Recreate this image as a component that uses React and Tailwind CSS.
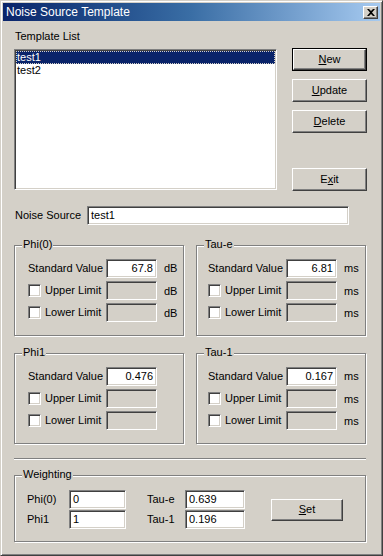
import React from 'react';

// classic 3D edges
const sunken = 'border border-t-[#808080] border-l-[#808080] border-b-white border-r-white shadow-[inset_1px_1px_0_#404040,inset_-1px_-1px_0_#d4d0c8]';
const raised = 'border border-t-white border-l-white border-b-[#404040] border-r-[#404040] shadow-[inset_-1px_-1px_0_#808080]';
const etched = 'border border-[#808080] shadow-[inset_1px_1px_0_white,1px_1px_0_white]';

const Button = ({ children, isDefault, className = '' }) => (
    <div className={`${isDefault ? 'border border-black' : ''} ${className}`}>
        <div className={`${raised} bg-[#d4d0c8] flex items-center justify-center w-full h-full`}>
            <span>{children}</span>
        </div>
    </div>
);

const Field = ({ value, align = 'left', disabled, className = '' }) => (
    <div className={`${sunken} ${disabled ? 'bg-[#d4d0c8]' : 'bg-white'} h-[19px] flex items-center px-[3px] ${align === 'right' ? 'justify-end' : ''} ${className}`}>
        <span className="leading-none">{value}</span>
    </div>
);

const Checkbox = () => (
    <div className={`${sunken} bg-white w-[13px] h-[13px] shrink-0`} />
);

const GroupBox = ({ title, className = '', children }) => (
    <div className={`relative ${etched} ${className}`}>
        <span className="absolute -top-[8px] left-[7px] px-[1px] bg-[#d4d0c8] leading-[13px]">{title}</span>
        {children}
    </div>
);

// one parameter group: standard value + optional limits
const ParamGroup = ({ title, value, unit, padLeft, showUnitOnValue = true }) => (
    <GroupBox title={title} className={`w-[170px] pt-[13px] pb-[13px] ${padLeft}`}>
        <div className="flex flex-col gap-[3px]">
            <div className="flex items-center">
                <span className="w-[78px]">Standard Value</span>
                <Field value={value} align="right" className="w-[51px]" />
                {showUnitOnValue && <span className="ml-[7px]">{unit}</span>}
            </div>
            {['Upper Limit', 'Lower Limit'].map(label => (
                <div key={label} className="flex items-center">
                    <div className="w-[78px] flex items-center gap-[4px]">
                        <Checkbox />
                        <span>{label}</span>
                    </div>
                    <Field value="" disabled className="w-[51px]" />
                    {unit && <span className="ml-[7px] mt-[2px]">{unit}</span>}
                </div>
            ))}
        </div>
    </GroupBox>
);

export default function App() {
    return (
        <div className="w-[383px] h-[556px] bg-[#d4d0c8] border border-t-[#d4d0c8] border-l-[#d4d0c8] border-r-[#404040] border-b-[#404040] shadow-[inset_1px_1px_0_white,inset_-1px_-1px_0_#808080] p-[2px] text-[11px] text-black font-['Liberation_Sans',Arial,sans-serif] select-none">
            {/* Title bar */}
            <div className="h-[18px] bg-gradient-to-r from-[#0a246a] via-[#3a6ea5] to-[#a6caf0] flex items-center justify-between pl-[3px] pr-[2px]">
                <span className="text-white text-[12px] leading-none">Noise Source Template</span>
                <div className={`${raised} bg-[#d4d0c8] w-[15px] h-[13px] flex items-center justify-center`}>
                    <svg width="8" height="7" viewBox="0 0 8 7">
                        <path d="M0 0h2l2 2 2-2h2L5 3.5 8 7H6L4 5 2 7H0l3-3.5z" fill="black" />
                    </svg>
                </div>
            </div>

            <div className="pl-[11px] pr-[13px]">
                {/* Template list + buttons */}
                <div className="flex items-start mt-[9px]">
                    <div className="flex flex-col w-[263px]">
                        <span className="leading-[13px] ml-[1px]">Template List</span>
                        <div className={`${sunken} bg-white h-[141px] mt-[6px] p-[1px]`}>
                            <div className="bg-[#0a246a] text-white h-[13px] leading-[12px] pl-[1px] outline-1 outline-dotted outline-[#d4d0c8] -outline-offset-1">test1</div>
                            <div className="h-[13px] leading-[13px] pl-[1px]">test2</div>
                        </div>
                    </div>
                    <div className="ml-[15px] mt-[18px] flex flex-col w-[75px]">
                        <Button isDefault className="h-[23px]"><span className="underline">N</span>ew</Button>
                        <Button className="h-[23px] mt-[8px]"><span className="underline">U</span>pdate</Button>
                        <Button className="h-[23px] mt-[8px]"><span className="underline">D</span>elete</Button>
                        <Button className="h-[23px] mt-[35px]">E<span className="underline">x</span>it</Button>
                    </div>
                </div>

                {/* Noise source */}
                <div className="flex items-center mt-[15px]">
                    <span className="w-[72px] ml-[1px]">Noise Source</span>
                    <Field value="test1" className="w-[262px]" />
                </div>

                {/* Parameter groups */}
                <div className="flex gap-[12px] mt-[20px]">
                    <ParamGroup title="Phi(0)" value="67.8" unit="dB" padLeft="pl-[13px]" />
                    <ParamGroup title="Tau-e" value="6.81" unit="ms" padLeft="pl-[11px]" />
                </div>
                <div className="flex gap-[12px] mt-[17px]">
                    <ParamGroup title="Phi1" value="0.476" unit="" padLeft="pl-[13px]" showUnitOnValue={false} />
                    <ParamGroup title="Tau-1" value="0.167" unit="ms" padLeft="pl-[11px]" />
                </div>

                {/* Separator */}
                <div className="mt-[14px] w-[352px] h-[2px] border-t border-t-[#808080] border-b border-b-white" />

                {/* Weighting */}
                <GroupBox title="Weighting" className="w-[352px] mt-[15px] pt-[14px] pb-[12px] pl-[12px]">
                    <div className="flex items-center">
                        <div className="grid grid-cols-[42px_57px] gap-y-[1px] items-center">
                            <span>Phi(0)</span>
                            <Field value="0" />
                            <span>Phi1</span>
                            <Field value="1" />
                        </div>
                        <div className="grid grid-cols-[38px_60px] gap-y-[1px] items-center ml-[21px]">
                            <span>Tau-e</span>
                            <Field value="0.639" />
                            <span>Tau-1</span>
                            <Field value="0.196" />
                        </div>
                        <Button className="w-[72px] h-[22px] ml-[26px]"><span className="underline">S</span>et</Button>
                    </div>
                </GroupBox>
            </div>
        </div>
    );
}
